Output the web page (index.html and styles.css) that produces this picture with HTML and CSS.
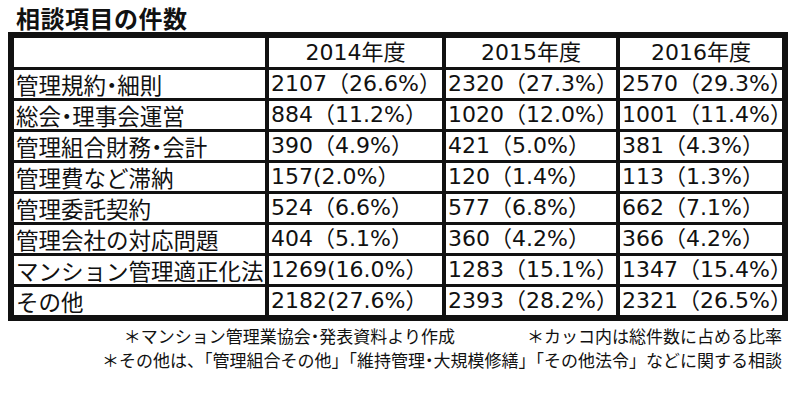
FILE: index.html
```html
<!DOCTYPE html>
<html lang="ja">
<head>
<meta charset="utf-8">
<link rel="stylesheet" href="styles.css">
</head>
<body>
<div class="page">
  <h1 class="title">相談項目の件数</h1>
  <div class="table">
    <div class="cell head"></div>
    <div class="cell head center num">2014年度</div>
    <div class="cell head center num">2015年度</div>
    <div class="cell head center num">2016年度</div>

    <div class="cell">管理規約<span class="dot">・</span>細則</div>
    <div class="cell num">2107（26.6%）</div>
    <div class="cell num">2320（27.3%）</div>
    <div class="cell num">2570（29.3%）</div>

    <div class="cell">総会<span class="dot">・</span>理事会運営</div>
    <div class="cell num">884（11.2%）</div>
    <div class="cell num">1020（12.0%）</div>
    <div class="cell num">1001（11.4%）</div>

    <div class="cell">管理組合財務<span class="dot">・</span>会計</div>
    <div class="cell num">390（4.9%）</div>
    <div class="cell num">421（5.0%）</div>
    <div class="cell num">381（4.3%）</div>

    <div class="cell">管理費など滞納</div>
    <div class="cell num">157(2.0%）</div>
    <div class="cell num">120（1.4%）</div>
    <div class="cell num">113（1.3%）</div>

    <div class="cell">管理委託契約</div>
    <div class="cell num">524（6.6%）</div>
    <div class="cell num">577（6.8%）</div>
    <div class="cell num">662（7.1%）</div>

    <div class="cell">管理会社の対応問題</div>
    <div class="cell num">404（5.1%）</div>
    <div class="cell num">360（4.2%）</div>
    <div class="cell num">366（4.2%）</div>

    <div class="cell">マンション管理適正化法</div>
    <div class="cell num">1269(16.0%）</div>
    <div class="cell num">1283（15.1%）</div>
    <div class="cell num">1347（15.4%）</div>

    <div class="cell">その他</div>
    <div class="cell num">2182(27.6%）</div>
    <div class="cell num">2393（28.2%）</div>
    <div class="cell num">2321（26.5%）</div>
  </div>
  <div class="notes">
    <div class="note-line">
      <span>＊マンション管理業協会<span class="dot">・</span>発表資料より作成</span>
      <span>＊カッコ内は総件数に占める比率</span>
    </div>
    <div class="note-line">
      <span>＊その他は、「管理組合その他」「維持管理<span class="dot">・</span>大規模修繕」「その他法令」などに関する相談</span>
    </div>
  </div>
</div>
</body>
</html>
```

FILE: styles.css
```css
html, body {
  margin: 0;
  padding: 0;
  background: #ffffff;
}

body {
  font-family: "Noto Sans CJK JP", "Noto Sans", sans-serif;
  color: #111111;
}

.page {
  width: 780px;
  padding: 0 8px;
}

.title {
  margin: 0;
  padding: 3px 0 0 8px;
  height: 29px;
  font-size: 24px;
  line-height: 29px;
  font-weight: 700;
  letter-spacing: 0.5px;
}

.table {
  display: grid;
  grid-template-columns: 251px 173px 170px 162px;
  grid-template-rows: 29px repeat(8, 28px);
  column-gap: 4px;
  row-gap: 3px;
  padding: 6px;
  background: #111111;
}

.cell {
  background: #ffffff;
  font-size: 22.5px;
  font-weight: 400;
  line-height: 28px;
  padding-left: 2px;
  white-space: nowrap;
}

.cell.num {
  font-family: "DejaVu Sans", "Noto Sans CJK JP", sans-serif;
  font-size: 22px;
}

.cell.head {
  line-height: 29px;
}

.center {
  text-align: center;
  padding-left: 0;
}

.dot {
  font-feature-settings: "palt";
}

.notes {
  font-size: 17px;
  line-height: 24px;
  padding-top: 3px;
  padding-right: 6px;
}

.note-line {
  display: flex;
  justify-content: flex-end;
  gap: 72px;
}
```
